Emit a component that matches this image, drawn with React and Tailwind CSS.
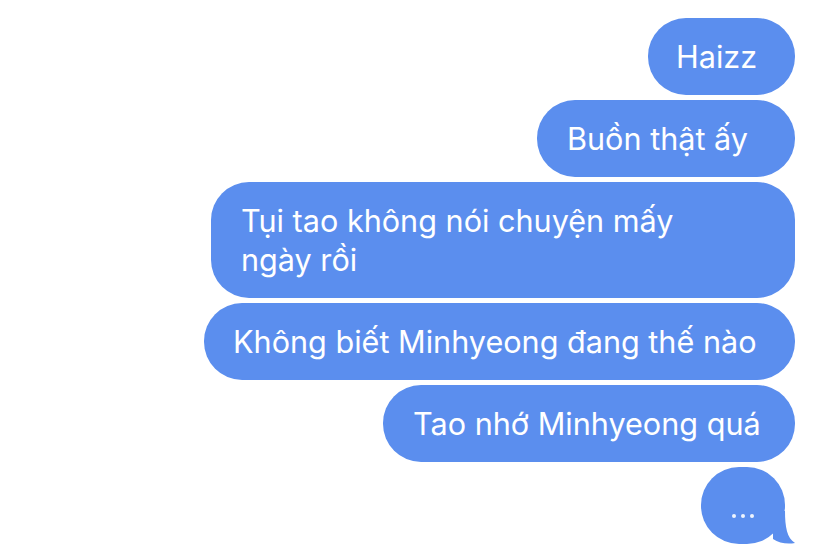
const messages = [
  { id: 1, text: "Haizz", box: "w-[147px] pl-[28px]" },
  { id: 2, text: "Buồn thật ấy", box: "w-[258px] pl-[30px]" },
  { id: 3, text: ["Tụi tao không nói chuyện mấy", "ngày rồi"], box: "w-[584px] pl-[30px]" },
  { id: 4, text: "Không biết Minhyeong đang thế nào", box: "w-[591px] pl-[29px]" },
  { id: 5, text: "Tao nhớ Minhyeong quá", box: "w-[412px] pl-[30px]" },
];

function Bubble({ text, box }) {
  const lines = Array.isArray(text) ? text : [text];
  return (
    <div
      className={`${box} rounded-[38px] bg-[#5b8eee] py-[19px] text-[30.6px] leading-[39px] text-white whitespace-nowrap`}
    >
      {lines.map((l, i) => (
        <div key={i}>{l}</div>
      ))}
    </div>
  );
}

function Typing() {
  return (
    <div className="relative w-[94px] h-[78px]">
      <div className="w-[84px] h-[77px] rounded-[38px] bg-[#5b8eee] flex justify-center gap-[5px] pt-[47px]">
        <span className="w-[4px] h-[4px] rounded-full bg-white/90" />
        <span className="w-[4px] h-[4px] rounded-full bg-white/90" />
        <span className="w-[4px] h-[4px] rounded-full bg-white/90" />
      </div>
      <svg
        className="absolute right-0 bottom-0"
        width="26"
        height="34"
        viewBox="0 0 26 34"
      >
        <path
          d="M4 0 L16 0 C16 16 18 27 26 32 C18 33.5 10 32 4 28 Z"
          fill="#5b8eee"
        />
      </svg>
    </div>
  );
}

export default function App() {
  return (
    <div
      className="w-[828px] h-[560px] bg-white flex flex-col items-end gap-[5px] pt-[18px] pr-[33px] overflow-hidden"
      style={{ fontFamily: "Inter, 'Noto Sans', sans-serif" }}
    >
      {messages.map((m) => (
        <Bubble key={m.id} text={m.text} box={m.box} />
      ))}
      <Typing />
    </div>
  );
}
